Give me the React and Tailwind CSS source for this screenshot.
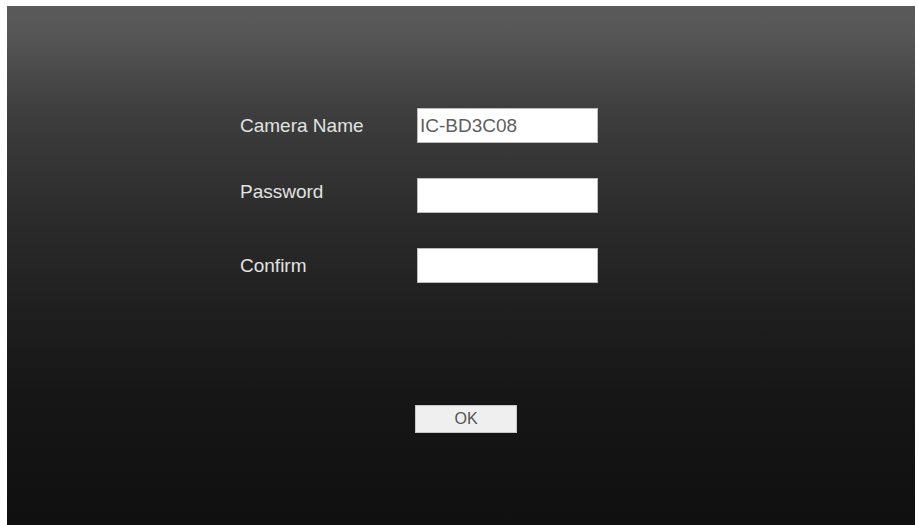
import React from "react";

const fields = [
  { label: "Camera Name", value: "IC-BD3C08", labelClass: "" },
  { label: "Password", value: "", labelClass: "pb-2" },
  { label: "Confirm", value: "", labelClass: "" },
];

const App = () => {
  return (
    <div className="w-[918px] h-[525px] bg-white pt-[6px] pl-[7px] pr-[3px] overflow-hidden">
      <div
        className="h-[519px] w-full bg-[linear-gradient(180deg,#5a5a5a_0%,#575757_5%,#3d3d3d_21%,#2c2c2c_40%,#1e1e1e_60%,#161616_75%,#101010_100%)] pl-[233px] pt-[102px]"
        style={{ fontFamily: '"Liberation Sans", Arial, sans-serif' }}
      >
        <div className="flex flex-col gap-[35px]">
          {fields.map((f) => (
            <div key={f.label} className="flex items-center h-[35px]">
              <span className={`w-[177px] text-[19px] text-[#e2e2e2] leading-none ${f.labelClass}`}>
                {f.label}
              </span>
              <input
                type="text"
                defaultValue={f.value}
                className="w-[181px] h-[35px] bg-white border border-[#bdbdbd] px-[2px] text-[19px] text-[#5e5e5e] outline-none"
                style={{ fontFamily: '"Liberation Sans", Arial, sans-serif' }}
              />
            </div>
          ))}
        </div>

        <button
          className="mt-[122px] ml-[175px] w-[102px] h-[28px] bg-[#efefef] border border-[#c8c8c8] text-[16px] text-[#555] leading-none"
          style={{ fontFamily: '"Liberation Sans", Arial, sans-serif' }}
        >
          OK
        </button>
      </div>
    </div>
  );
};

export default App;
